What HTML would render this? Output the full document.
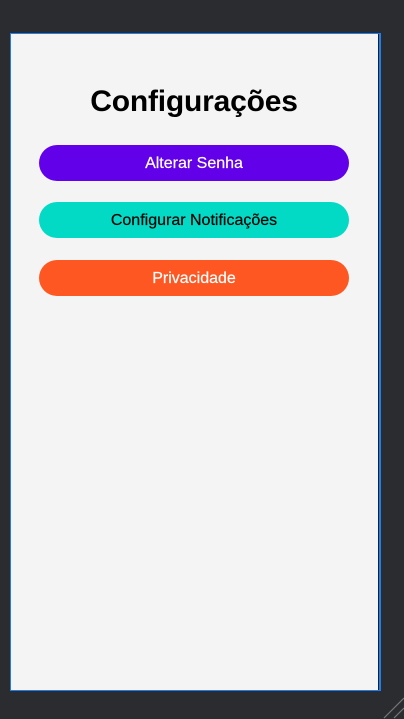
<!DOCTYPE html>
<html><head><meta charset="utf-8"><style>
html,body{margin:0;padding:0;}
body{width:404px;height:719px;background:#2b2c30;position:relative;overflow:hidden;font-family:"Liberation Sans",sans-serif;}
.frame{position:absolute;left:10px;top:33px;width:368px;height:656px;background:#f4f4f5;border:1px solid #1e7ef0;border-right:2px solid #1e7ef0;box-shadow:inset -1px 0 0 #1f2024;}
h1{position:absolute;left:10px;width:368px;top:84px;margin:0;text-align:center;font-size:30px;font-weight:bold;color:#000;line-height:36px;letter-spacing:-0.2px;}
.btn{position:absolute;left:39px;width:310px;height:36px;border-radius:18px;text-align:center;line-height:38px;font-size:16px;-webkit-text-stroke:0.2px currentColor;}
.b1{top:145px;background:#6200ea;color:#fff;}
.b2{top:202px;background:#03dac6;color:#000;}
.b3{top:260px;background:#ff5722;color:#fff;}
</style></head><body>
<div class="frame"></div>
<h1>Configurações</h1>
<div class="btn b1">Alterar Senha</div>
<div class="btn b2">Configurar Notificações</div>
<div class="btn b3">Privacidade</div>
<svg style="position:absolute;left:380px;top:694px" width="24" height="25"><path d="M4 24 L24 4 M14 24 L24 14" stroke="#777" stroke-width="1.2"/></svg>
</body></html>
